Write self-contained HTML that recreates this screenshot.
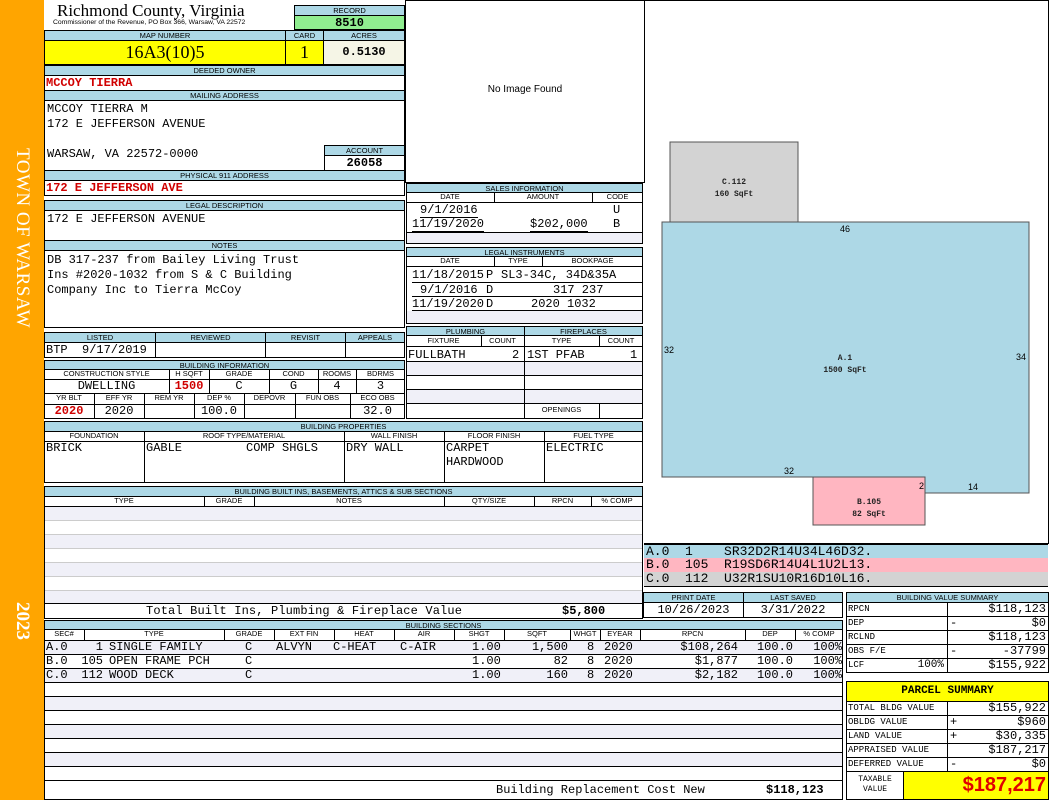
<!DOCTYPE html>
<html><head><meta charset="utf-8"><style>
*{margin:0;padding:0;box-sizing:border-box}
body{width:1050px;height:800px;position:relative;background:#fff;overflow:hidden;font-family:"Liberation Mono",monospace;font-size:12px;color:#000}
div{position:absolute}
.h{background:#add8e6;border:1px solid #000;font-family:"Liberation Sans",sans-serif;font-size:7.5px;text-align:center;line-height:9px;white-space:nowrap;overflow:hidden}
.b{border:1px solid #000;background:#fff}
.m{font-family:"Liberation Mono",monospace;font-size:12px;white-space:nowrap;line-height:14px}
.r{color:#d00000;font-weight:bold}
.c{text-align:center}.rt{text-align:right}
.s{font-family:"Liberation Sans",sans-serif;font-size:7.5px;text-align:center;line-height:10px}
.alt{background:#f0f0f8}
</style></head><body>
<div style="left:0;top:0;width:44px;height:800px;background:#ffa500"></div>
<div style="left:10px;top:148px;writing-mode:vertical-rl;color:#fff;font-family:'Liberation Serif',serif;font-size:19px;line-height:24px;letter-spacing:0.5px">TOWN OF WARSAW</div>
<div style="left:11px;top:602px;writing-mode:vertical-rl;color:#fff;font-family:'Liberation Serif',serif;font-size:19px;font-weight:bold;line-height:22px">2023</div>

<div style="left:57px;top:2px;font-family:'Liberation Serif',serif;font-size:17px;line-height:18px">Richmond County, Virginia</div>
<div style="left:53px;top:19px;font-family:'Liberation Sans',sans-serif;font-size:6.8px;line-height:8px;white-space:nowrap">Commissioner of the Revenue, PO Box 366, Warsaw, VA 22572</div>
<div class="h" style="left:294px;top:5px;width:111px;height:11px">RECORD</div>
<div style="left:294px;top:15px;width:111px;height:15px;background:#90ee90;border:1px solid #000;font-weight:bold;font-size:12px;text-align:center;line-height:14px">8510</div>
<div class="h" style="left:44px;top:30px;width:242px;height:11px">MAP NUMBER</div>
<div class="h" style="left:285px;top:30px;width:39px;height:11px">CARD</div>
<div class="h" style="left:323px;top:30px;width:82px;height:11px">ACRES</div>
<div style="left:44px;top:40px;width:242px;height:25px;background:#ffff00;border:1px solid #000;font-family:'Liberation Serif',serif;font-size:18px;text-align:center;line-height:23px">16A3(10)5</div>
<div style="left:285px;top:40px;width:39px;height:25px;background:#ffff00;border:1px solid #000;font-family:'Liberation Serif',serif;font-size:18px;text-align:center;line-height:23px">1</div>
<div style="left:323px;top:40px;width:82px;height:25px;background:#f5f5e6;border:1px solid #000;font-weight:bold;text-align:center;line-height:23px">0.5130</div>
<div class="h" style="left:44px;top:65px;width:361px;height:11px">DEEDED OWNER</div>
<div class="b m r" style="left:44px;top:75px;width:361px;height:16px;padding-left:1px">MCCOY TIERRA</div>
<div class="h" style="left:44px;top:90px;width:361px;height:11px">MAILING ADDRESS</div>
<div class="b" style="left:44px;top:100px;width:361px;height:71px"></div>
<div class="m" style="left:47px;top:102px">MCCOY TIERRA M</div>
<div class="m" style="left:47px;top:117px">172 E JEFFERSON AVENUE</div>
<div class="m" style="left:47px;top:147px">WARSAW, VA 22572-0000</div>
<div class="h" style="left:324px;top:145px;width:81px;height:11px">ACCOUNT</div>
<div class="b m c" style="left:324px;top:155px;width:81px;height:16px;font-weight:bold">26058</div>
<div class="h" style="left:44px;top:170px;width:361px;height:11px">PHYSICAL 911 ADDRESS</div>
<div class="b m r" style="left:44px;top:180px;width:361px;height:16px;padding-left:1px">172 E JEFFERSON AVE</div>
<div class="h" style="left:44px;top:200px;width:361px;height:11px">LEGAL DESCRIPTION</div>
<div class="b m" style="left:44px;top:210px;width:361px;height:31px;padding:1px 2px">172 E JEFFERSON AVENUE</div>
<div class="h" style="left:44px;top:240px;width:361px;height:11px">NOTES</div>
<div class="b m" style="left:44px;top:250px;width:361px;height:78px;padding:2px 2px;line-height:15px">DB 317-237 from Bailey Living Trust<br>Ins #2020-1032 from S &amp; C Building<br>Company Inc to Tierra McCoy</div>

<div class="h" style="left:44px;top:332px;width:112px;height:11px">LISTED</div>
<div class="h" style="left:155px;top:332px;width:111px;height:11px">REVIEWED</div>
<div class="h" style="left:265px;top:332px;width:81px;height:11px">REVISIT</div>
<div class="h" style="left:345px;top:332px;width:60px;height:11px">APPEALS</div>
<div class="b m" style="left:44px;top:342px;width:112px;height:16px;padding-left:1px">BTP&nbsp;&nbsp;9/17/2019</div>
<div class="b" style="left:155px;top:342px;width:111px;height:16px"></div>
<div class="b" style="left:265px;top:342px;width:81px;height:16px"></div>
<div class="b" style="left:345px;top:342px;width:60px;height:16px"></div>

<div class="h" style="left:44px;top:360px;width:361px;height:10px">BUILDING INFORMATION</div>
<div class="b" style="left:44px;top:369px;width:361px;height:50px"></div>
<div class="s" style="left:44px;top:369px;width:125px">CONSTRUCTION STYLE</div>
<div class="s" style="left:169px;top:369px;width:40px">H SQFT</div>
<div class="s" style="left:209px;top:369px;width:60px">GRADE</div>
<div class="s" style="left:269px;top:369px;width:49px">COND</div>
<div class="s" style="left:318px;top:369px;width:38px">ROOMS</div>
<div class="s" style="left:356px;top:369px;width:49px">BDRMS</div>
<div class="m c" style="left:44px;top:379px;width:125px">DWELLING</div>
<div class="m c r" style="left:169px;top:379px;width:40px">1500</div>
<div class="m c" style="left:209px;top:379px;width:60px">C</div>
<div class="m c" style="left:269px;top:379px;width:49px">G</div>
<div class="m c" style="left:318px;top:379px;width:38px">4</div>
<div class="m c" style="left:356px;top:379px;width:49px">3</div>
<div style="left:44px;top:379px;width:361px;border-top:1px solid #000"></div>
<div style="left:44px;top:393px;width:361px;border-top:1px solid #000"></div>
<div style="left:44px;top:404px;width:361px;border-top:1px solid #000"></div>
<div style="left:169px;top:369px;height:24px;border-left:1px solid #000"></div>
<div style="left:209px;top:369px;height:24px;border-left:1px solid #000"></div>
<div style="left:269px;top:369px;height:24px;border-left:1px solid #000"></div>
<div style="left:318px;top:369px;height:24px;border-left:1px solid #000"></div>
<div style="left:356px;top:369px;height:24px;border-left:1px solid #000"></div>
<div class="s" style="left:44px;top:393px;width:50px">YR BLT</div>
<div class="s" style="left:94px;top:393px;width:50px">EFF YR</div>
<div class="s" style="left:144px;top:393px;width:50px">REM YR</div>
<div class="s" style="left:194px;top:393px;width:50px">DEP %</div>
<div class="s" style="left:244px;top:393px;width:51px">DEPOVR</div>
<div class="s" style="left:295px;top:393px;width:55px">FUN OBS</div>
<div class="s" style="left:350px;top:393px;width:55px">ECO OBS</div>
<div class="m c r" style="left:44px;top:404px;width:50px">2020</div>
<div class="m c" style="left:94px;top:404px;width:50px">2020</div>
<div class="m c" style="left:194px;top:404px;width:50px">100.0</div>
<div class="m c" style="left:350px;top:404px;width:55px">32.0</div>
<div style="left:94px;top:393px;height:26px;border-left:1px solid #000"></div>
<div style="left:144px;top:393px;height:26px;border-left:1px solid #000"></div>
<div style="left:194px;top:393px;height:26px;border-left:1px solid #000"></div>
<div style="left:244px;top:393px;height:26px;border-left:1px solid #000"></div>
<div style="left:295px;top:393px;height:26px;border-left:1px solid #000"></div>
<div style="left:350px;top:393px;height:26px;border-left:1px solid #000"></div>

<div class="h" style="left:44px;top:421px;width:599px;height:11px">BUILDING PROPERTIES</div>
<div class="b" style="left:44px;top:431px;width:599px;height:52px"></div>
<div style="left:44px;top:441px;width:599px;border-top:1px solid #000"></div>
<div class="s" style="left:44px;top:431px;width:100px">FOUNDATION</div>
<div class="s" style="left:144px;top:431px;width:200px">ROOF TYPE/MATERIAL</div>
<div class="s" style="left:344px;top:431px;width:100px">WALL FINISH</div>
<div class="s" style="left:444px;top:431px;width:100px">FLOOR FINISH</div>
<div class="s" style="left:544px;top:431px;width:99px">FUEL TYPE</div>
<div style="left:144px;top:431px;height:52px;border-left:1px solid #000"></div>
<div style="left:344px;top:431px;height:52px;border-left:1px solid #000"></div>
<div style="left:444px;top:431px;height:52px;border-left:1px solid #000"></div>
<div style="left:544px;top:431px;height:52px;border-left:1px solid #000"></div>
<div class="m" style="left:46px;top:441px">BRICK</div>
<div class="m" style="left:146px;top:441px">GABLE</div>
<div class="m" style="left:246px;top:441px">COMP SHGLS</div>
<div class="m" style="left:346px;top:441px">DRY WALL</div>
<div class="m" style="left:446px;top:441px">CARPET<br>HARDWOOD</div>
<div class="m" style="left:546px;top:441px">ELECTRIC</div>

<div class="h" style="left:44px;top:486px;width:599px;height:11px">BUILDING BUILT INS, BASEMENTS, ATTICS &amp; SUB SECTIONS</div>
<div class="b" style="left:44px;top:496px;width:599px;height:123px"></div>
<div class="s" style="left:44px;top:496px;width:160px">TYPE</div>
<div class="s" style="left:204px;top:496px;width:50px">GRADE</div>
<div class="s" style="left:254px;top:496px;width:190px">NOTES</div>
<div class="s" style="left:444px;top:496px;width:90px">QTY/SIZE</div>
<div class="s" style="left:534px;top:496px;width:57px">RPCN</div>
<div class="s" style="left:591px;top:496px;width:52px">% COMP</div>
<div style="left:204px;top:496px;height:10px;border-left:1px solid #000"></div>
<div style="left:254px;top:496px;height:10px;border-left:1px solid #000"></div>
<div style="left:444px;top:496px;height:10px;border-left:1px solid #000"></div>
<div style="left:534px;top:496px;height:10px;border-left:1px solid #000"></div>
<div style="left:591px;top:496px;height:10px;border-left:1px solid #000"></div>
<div style="left:45px;top:506px;width:597px;height:14px;border-top:1px solid #000" class="alt"></div>
<div style="left:45px;top:520px;width:597px;height:14px;border-top:1px solid #ccc"></div>
<div style="left:45px;top:534px;width:597px;height:14px;border-top:1px solid #ccc" class="alt"></div>
<div style="left:45px;top:548px;width:597px;height:14px;border-top:1px solid #ccc"></div>
<div style="left:45px;top:562px;width:597px;height:14px;border-top:1px solid #ccc" class="alt"></div>
<div style="left:45px;top:576px;width:597px;height:14px;border-top:1px solid #ccc"></div>
<div style="left:45px;top:590px;width:597px;height:13px;border-top:1px solid #ccc" class="alt"></div>
<div style="left:44px;top:603px;width:599px;border-top:1px solid #000"></div>
<div class="m" style="left:146px;top:604px;letter-spacing:0.15px">Total Built Ins, Plumbing &amp; Fireplace Value</div>
<div class="m" style="left:562px;top:604px;font-weight:bold">$5,800</div>

<div class="h" style="left:44px;top:620px;width:799px;height:10px">BUILDING SECTIONS</div>
<div class="b" style="left:44px;top:629px;width:799px;height:171px"></div>
<div class="s" style="left:44px;top:629px;width:40px">SEC#</div>
<div class="s" style="left:84px;top:629px;width:140px">TYPE</div>
<div class="s" style="left:224px;top:629px;width:50px">GRADE</div>
<div class="s" style="left:274px;top:629px;width:60px">EXT FIN</div>
<div class="s" style="left:334px;top:629px;width:60px">HEAT</div>
<div class="s" style="left:394px;top:629px;width:60px">AIR</div>
<div class="s" style="left:454px;top:629px;width:50px">SHGT</div>
<div class="s" style="left:504px;top:629px;width:66px">SQFT</div>
<div class="s" style="left:570px;top:629px;width:30px">WHGT</div>
<div class="s" style="left:600px;top:629px;width:40px">EYEAR</div>
<div class="s" style="left:640px;top:629px;width:105px">RPCN</div>
<div class="s" style="left:745px;top:629px;width:50px">DEP</div>
<div class="s" style="left:795px;top:629px;width:48px">% COMP</div>
<div style="left:84px;top:629px;height:11px;border-left:1px solid #000"></div>
<div style="left:224px;top:629px;height:11px;border-left:1px solid #000"></div>
<div style="left:274px;top:629px;height:11px;border-left:1px solid #000"></div>
<div style="left:334px;top:629px;height:11px;border-left:1px solid #000"></div>
<div style="left:394px;top:629px;height:11px;border-left:1px solid #000"></div>
<div style="left:454px;top:629px;height:11px;border-left:1px solid #000"></div>
<div style="left:504px;top:629px;height:11px;border-left:1px solid #000"></div>
<div style="left:570px;top:629px;height:11px;border-left:1px solid #000"></div>
<div style="left:600px;top:629px;height:11px;border-left:1px solid #000"></div>
<div style="left:640px;top:629px;height:11px;border-left:1px solid #000"></div>
<div style="left:745px;top:629px;height:11px;border-left:1px solid #000"></div>
<div style="left:795px;top:629px;height:11px;border-left:1px solid #000"></div>
<div style="left:45px;top:640px;width:797px;height:14px;border-top:1px solid #000" class="alt"></div>
<div style="left:45px;top:654px;width:797px;height:14px;border-top:1px solid #000"></div>
<div style="left:45px;top:668px;width:797px;height:14px;border-top:1px solid #000" class="alt"></div>
<div style="left:45px;top:682px;width:797px;height:14px;border-top:1px solid #000"></div>
<div style="left:45px;top:696px;width:797px;height:14px;border-top:1px solid #000" class="alt"></div>
<div style="left:45px;top:710px;width:797px;height:14px;border-top:1px solid #000"></div>
<div style="left:45px;top:724px;width:797px;height:14px;border-top:1px solid #000" class="alt"></div>
<div style="left:45px;top:738px;width:797px;height:14px;border-top:1px solid #000"></div>
<div style="left:45px;top:752px;width:797px;height:14px;border-top:1px solid #000" class="alt"></div>
<div style="left:45px;top:766px;width:797px;height:14px;border-top:1px solid #000"></div>
<div style="left:45px;top:780px;width:797px;height:1px;border-top:1px solid #000"></div>
<div class="m" style="left:46px;top:640px">A.0</div>
<div class="m" style="left:46px;top:654px">B.0</div>
<div class="m" style="left:46px;top:668px">C.0</div>
<div class="m rt" style="left:76px;top:640px;width:27px">1</div>
<div class="m rt" style="left:76px;top:654px;width:27px">105</div>
<div class="m rt" style="left:76px;top:668px;width:27px">112</div>
<div class="m" style="left:109px;top:640px">SINGLE FAMILY</div>
<div class="m" style="left:109px;top:654px">OPEN FRAME PCH</div>
<div class="m" style="left:109px;top:668px">WOOD DECK</div>
<div class="m" style="left:245px;top:640px">C</div>
<div class="m" style="left:245px;top:654px">C</div>
<div class="m" style="left:245px;top:668px">C</div>
<div class="m" style="left:276px;top:640px">ALVYN</div>
<div class="m" style="left:333px;top:640px">C-HEAT</div>
<div class="m" style="left:400px;top:640px">C-AIR</div>
<div class="m" style="left:472px;top:640px">1.00</div>
<div class="m" style="left:472px;top:654px">1.00</div>
<div class="m" style="left:472px;top:668px">1.00</div>
<div class="m rt" style="left:500px;top:640px;width:68px">1,500</div>
<div class="m rt" style="left:500px;top:654px;width:68px">82</div>
<div class="m rt" style="left:500px;top:668px;width:68px">160</div>
<div class="m" style="left:587px;top:640px">8</div>
<div class="m" style="left:587px;top:654px">8</div>
<div class="m" style="left:587px;top:668px">8</div>
<div class="m" style="left:604px;top:640px">2020</div>
<div class="m" style="left:604px;top:654px">2020</div>
<div class="m" style="left:604px;top:668px">2020</div>
<div class="m rt" style="left:640px;top:640px;width:98px">$108,264</div>
<div class="m rt" style="left:640px;top:654px;width:98px">$1,877</div>
<div class="m rt" style="left:640px;top:668px;width:98px">$2,182</div>
<div class="m rt" style="left:740px;top:640px;width:53px">100.0</div>
<div class="m rt" style="left:740px;top:654px;width:53px">100.0</div>
<div class="m rt" style="left:740px;top:668px;width:53px">100.0</div>
<div class="m rt" style="left:795px;top:640px;width:47px">100%</div>
<div class="m rt" style="left:795px;top:654px;width:47px">100%</div>
<div class="m rt" style="left:795px;top:668px;width:47px">100%</div>
<div class="m" style="left:496px;top:783px">Building Replacement Cost New</div>
<div class="m" style="left:766px;top:783px;font-weight:bold">$118,123</div>

<div class="b" style="left:405px;top:0;width:240px;height:183px"></div>
<div style="left:405px;top:84px;width:240px;text-align:center;font-family:'Liberation Sans',sans-serif;font-size:10px">No Image Found</div>

<div class="h" style="left:406px;top:183px;width:237px;height:10px">SALES INFORMATION</div>
<div class="b" style="left:406px;top:192px;width:237px;height:52px"></div>
<div class="s" style="left:406px;top:192px;width:88px">DATE</div>
<div class="s" style="left:494px;top:192px;width:98px">AMOUNT</div>
<div class="s" style="left:592px;top:192px;width:51px">CODE</div>
<div style="left:494px;top:192px;height:10px;border-left:1px solid #000"></div>
<div style="left:592px;top:192px;height:10px;border-left:1px solid #000"></div>
<div style="left:406px;top:202px;width:237px;border-top:1px solid #000"></div>
<div class="m" style="left:420px;top:203px;border-bottom:1px solid #000">9/1/2016</div>
<div class="m" style="left:613px;top:203px">U</div>
<div class="m" style="left:412px;top:217px;border-bottom:1px solid #000">11/19/2020</div>
<div class="m" style="left:530px;top:217px;border-bottom:1px solid #000">$202,000</div>
<div class="m" style="left:613px;top:217px">B</div>
<div class="alt" style="left:407px;top:232px;width:235px;height:11px;border-top:1px solid #000"></div>

<div class="h" style="left:406px;top:247px;width:237px;height:10px">LEGAL INSTRUMENTS</div>
<div class="b" style="left:406px;top:256px;width:237px;height:68px"></div>
<div class="s" style="left:406px;top:256px;width:88px">DATE</div>
<div class="s" style="left:494px;top:256px;width:48px">TYPE</div>
<div class="s" style="left:542px;top:256px;width:101px">BOOKPAGE</div>
<div style="left:494px;top:256px;height:10px;border-left:1px solid #000"></div>
<div style="left:542px;top:256px;height:10px;border-left:1px solid #000"></div>
<div style="left:406px;top:266px;width:237px;border-top:1px solid #000"></div>
<div style="left:412px;top:282px;width:231px;border-top:1px solid #000"></div>
<div style="left:412px;top:296px;width:231px;border-top:1px solid #000"></div>
<div style="left:412px;top:310px;width:231px;border-top:1px solid #000"></div>
<div class="m" style="left:412px;top:268px">11/18/2015</div>
<div class="m" style="left:420px;top:283px">9/1/2016</div>
<div class="m" style="left:412px;top:297px">11/19/2020</div>
<div class="m" style="left:486px;top:268px">P</div>
<div class="m" style="left:486px;top:283px">D</div>
<div class="m" style="left:486px;top:297px">D</div>
<div class="m" style="left:501px;top:268px;width:142px;overflow:hidden">SL3-34C, 34D&amp;35A</div>
<div class="m" style="left:553px;top:283px">317 237</div>
<div class="m" style="left:531px;top:297px">2020 1032</div>
<div class="alt" style="left:407px;top:311px;width:235px;height:12px"></div>

<div class="h" style="left:406px;top:326px;width:119px;height:10px">PLUMBING</div>
<div class="h" style="left:524px;top:326px;width:119px;height:10px">FIREPLACES</div>
<div class="b" style="left:406px;top:335px;width:237px;height:84px"></div>
<div style="left:524px;top:335px;height:84px;border-left:1px solid #000"></div>
<div class="s" style="left:406px;top:336px;width:75px">FIXTURE</div>
<div class="s" style="left:481px;top:336px;width:43px">COUNT</div>
<div class="s" style="left:524px;top:336px;width:75px">TYPE</div>
<div class="s" style="left:599px;top:336px;width:44px">COUNT</div>
<div style="left:481px;top:335px;height:11px;border-left:1px solid #000"></div>
<div style="left:599px;top:335px;height:11px;border-left:1px solid #000"></div>
<div style="left:406px;top:346px;width:237px;border-top:1px solid #000"></div>
<div class="m" style="left:408px;top:348px">FULLBATH</div>
<div class="m" style="left:512px;top:348px">2</div>
<div class="m" style="left:527px;top:348px">1ST PFAB</div>
<div class="m" style="left:630px;top:348px">1</div>
<div class="alt" style="left:407px;top:361px;width:235px;height:14px;border-top:1px solid #000"></div>
<div style="left:407px;top:375px;width:235px;border-top:1px solid #000"></div>
<div class="alt" style="left:407px;top:389px;width:235px;height:14px;border-top:1px solid #000"></div>
<div style="left:407px;top:403px;width:235px;border-top:1px solid #000"></div>
<div style="left:524px;top:335px;height:84px;border-left:1px solid #000"></div>
<div class="s" style="left:524px;top:405px;width:75px">OPENINGS</div>
<div style="left:599px;top:403px;height:16px;border-left:1px solid #000"></div>

<div style="left:644px;top:0;width:405px;height:544px;border:1px solid #000;border-left:none"></div>
<svg style="position:absolute;left:0;top:0" width="1050" height="545">
<rect x="670" y="142" width="128" height="80" fill="#d3d3d3" stroke="#555" stroke-width="1"/>
<polygon points="662,222 1029,222 1029,493 917,493 917,477 662,477" fill="#add8e6" stroke="#555" stroke-width="1"/>
<rect x="813" y="477" width="112" height="48" fill="#ffb6c1" stroke="#555" stroke-width="1"/>
<g font-family="Liberation Mono, monospace" font-size="8" font-weight="bold" text-anchor="middle" fill="#222">
<text x="734" y="184">C.112</text><text x="734" y="196">160 SqFt</text>
<text x="845" y="360">A.1</text><text x="845" y="372">1500 SqFt</text>
<text x="869" y="504">B.105</text><text x="869" y="516">82 SqFt</text>
</g>
<g font-family="Liberation Sans, sans-serif" font-size="9" fill="#000">
<text x="840" y="232">46</text><text x="664" y="353">32</text><text x="1016" y="360">34</text>
<text x="784" y="474">32</text><text x="919" y="489">2</text><text x="968" y="490">14</text>
</g>
</svg>
<div class="m" style="left:644px;top:544px;width:404px;height:14px;background:#add8e6;border-top:1px solid #000;font-size:13px;padding-left:2px">A.0&nbsp;&nbsp;1&nbsp;&nbsp;&nbsp;&nbsp;SR32D2R14U34L46D32.</div>
<div class="m" style="left:644px;top:558px;width:404px;height:14px;background:#ffb6c1;font-size:13px;padding-left:2px">B.0&nbsp;&nbsp;105&nbsp;&nbsp;R19SD6R14U4L1U2L13.</div>
<div class="m" style="left:644px;top:572px;width:404px;height:15px;background:#d3d3d3;border-bottom:1px solid #000;font-size:13px;padding-left:2px">C.0&nbsp;&nbsp;112&nbsp;&nbsp;U32R1SU10R16D10L16.</div>

<div class="h" style="left:643px;top:592px;width:101px;height:11px">PRINT DATE</div>
<div class="h" style="left:743px;top:592px;width:100px;height:11px">LAST SAVED</div>
<div class="b m c" style="left:643px;top:602px;width:101px;height:16px">10/26/2023</div>
<div class="b m c" style="left:743px;top:602px;width:100px;height:16px">3/31/2022</div>

<div class="h" style="left:846px;top:592px;width:203px;height:11px">BUILDING VALUE SUMMARY</div>
<div class="b" style="left:846px;top:602px;width:203px;height:71px"></div>
<div style="left:947px;top:602px;height:71px;border-left:1px solid #000"></div>
<div style="left:846px;top:616px;width:203px;border-top:1px solid #000"></div>
<div style="left:846px;top:630px;width:203px;border-top:1px solid #000"></div>
<div style="left:846px;top:644px;width:203px;border-top:1px solid #000"></div>
<div style="left:846px;top:658px;width:203px;border-top:1px solid #000"></div>
<div class="m" style="left:848px;top:602px;font-size:9px">RPCN</div>
<div class="m" style="left:848px;top:616px;font-size:9px">DEP</div>
<div class="m" style="left:848px;top:630px;font-size:9px">RCLND</div>
<div class="m" style="left:848px;top:644px;font-size:9px">OBS F/E</div>
<div class="m" style="left:848px;top:658px;font-size:9px">LCF</div>
<div class="m rt" style="left:880px;top:658px;width:64px;font-size:11px">100%</div>
<div class="m" style="left:950px;top:616px">-</div>
<div class="m" style="left:950px;top:644px">-</div>
<div class="m rt" style="left:950px;top:602px;width:96px">$118,123</div>
<div class="m rt" style="left:950px;top:616px;width:96px">$0</div>
<div class="m rt" style="left:950px;top:630px;width:96px">$118,123</div>
<div class="m rt" style="left:950px;top:644px;width:96px">-37799</div>
<div class="m rt" style="left:950px;top:658px;width:96px">$155,922</div>

<div style="left:846px;top:681px;width:203px;height:21px;background:#ffff00;border:1px solid #000;font-family:'Liberation Mono',monospace;font-weight:bold;font-size:11px;text-align:center;line-height:19px">PARCEL SUMMARY</div>
<div class="b" style="left:846px;top:701px;width:203px;height:71px"></div>
<div style="left:947px;top:701px;height:71px;border-left:1px solid #000"></div>
<div style="left:846px;top:715px;width:203px;border-top:1px solid #000"></div>
<div style="left:846px;top:729px;width:203px;border-top:1px solid #000"></div>
<div style="left:846px;top:743px;width:203px;border-top:1px solid #000"></div>
<div style="left:846px;top:757px;width:203px;border-top:1px solid #000"></div>
<div class="m" style="left:848px;top:701px;font-size:9px">TOTAL BLDG VALUE</div>
<div class="m" style="left:848px;top:715px;font-size:9px">OBLDG VALUE</div>
<div class="m" style="left:848px;top:729px;font-size:9px">LAND VALUE</div>
<div class="m" style="left:848px;top:743px;font-size:9px">APPRAISED VALUE</div>
<div class="m" style="left:848px;top:757px;font-size:9px">DEFERRED VALUE</div>
<div class="m" style="left:950px;top:715px">+</div>
<div class="m" style="left:950px;top:729px">+</div>
<div class="m" style="left:950px;top:757px">-</div>
<div class="m rt" style="left:950px;top:701px;width:96px">$155,922</div>
<div class="m rt" style="left:950px;top:715px;width:96px">$960</div>
<div class="m rt" style="left:950px;top:729px;width:96px">$30,335</div>
<div class="m rt" style="left:950px;top:743px;width:96px">$187,217</div>
<div class="m rt" style="left:950px;top:757px;width:96px">$0</div>
<div class="b" style="left:846px;top:771px;width:58px;height:29px;font-size:8px;line-height:10px;text-align:center;padding-top:3px">TAXABLE<br>VALUE</div>
<div style="left:903px;top:771px;width:146px;height:29px;background:#ffff00;border:1px solid #000;color:#e00000;font-family:'Liberation Sans',sans-serif;font-weight:bold;font-size:20px;text-align:right;line-height:27px;padding-right:2px">$187,217</div>
</body></html>
